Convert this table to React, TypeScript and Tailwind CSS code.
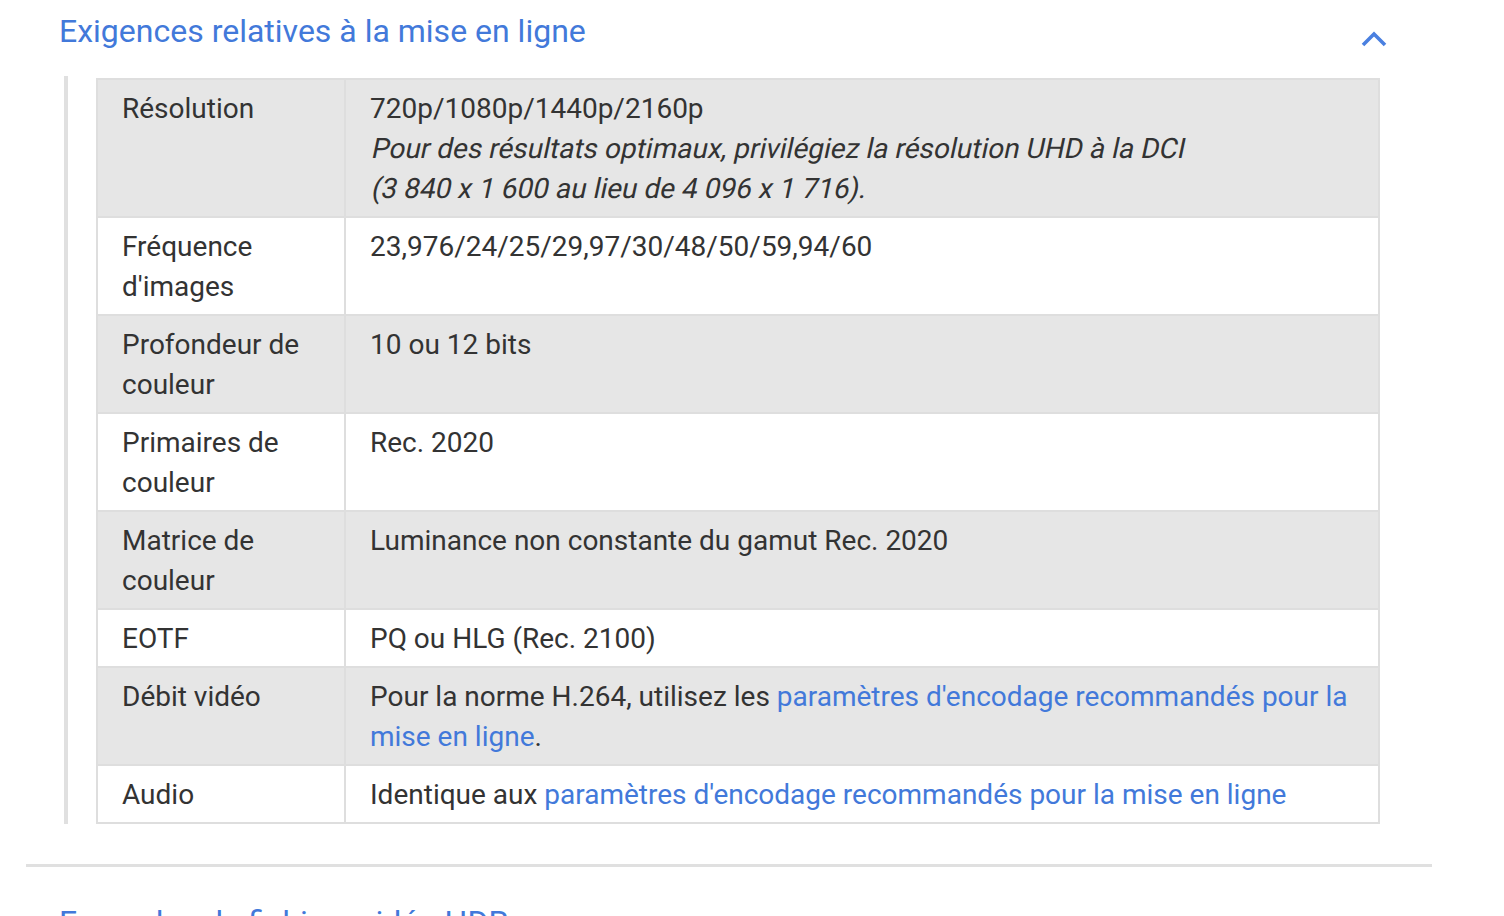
import React from "react";

const L = ({ children }: { children: React.ReactNode }) => (
  <span className="text-[#4279da]">{children}</span>
);

const Slant = ({ children }: { children: React.ReactNode }) => (
  <span className="inline-block -skew-x-12 origin-[0_31px]">{children}</span>
);

type Row = { k: React.ReactNode; v: React.ReactNode };

const rows: Row[] = [
  {
    k: "Résolution",
    v: (
      <>
        720p/1080p/1440p/2160p
        <br />
        <Slant>
          Pour des résultats optimaux, privilégiez la résolution UHD à la DCI
        </Slant>
        <br />
        <Slant>(3 840 x 1 600 au lieu de 4 096 x 1 716).</Slant>
      </>
    ),
  },
  { k: "Fréquence d'images", v: "23,976/24/25/29,97/30/48/50/59,94/60" },
  { k: "Profondeur de couleur", v: "10 ou 12 bits" },
  { k: "Primaires de couleur", v: "Rec. 2020" },
  { k: "Matrice de couleur", v: "Luminance non constante du gamut Rec. 2020" },
  { k: "EOTF", v: "PQ ou HLG (Rec. 2100)" },
  {
    k: "Débit vidéo",
    v: (
      <>
        Pour la norme H.264, utilisez les{" "}
        <L>paramètres d'encodage recommandés pour la mise en ligne</L>.
      </>
    ),
  },
  {
    k: "Audio",
    v: (
      <>
        Identique aux{" "}
        <L>paramètres d'encodage recommandés pour la mise en ligne</L>
      </>
    ),
  },
];

export default function App() {
  return (
    <div
      className="w-[1504px] h-[916px] overflow-hidden bg-white text-[#333333]"
      style={{ fontFamily: "Roboto, 'Noto Sans', sans-serif" }}
    >
      <div className="ml-[26px] w-[1406px]">
        {/* Header */}
        <div className="flex h-[76px] items-start justify-between pl-[33px] pr-[44px]">
          <div className="pt-[11px] text-[32px] leading-[40px] text-[#4279da]">
            Exigences relatives à la mise en ligne
          </div>
          <svg
            className="mt-[25px]"
            width="28"
            height="28"
            viewBox="0 0 28 28"
            fill="none"
          >
            <polyline
              points="3,20 14,9 25,20"
              stroke="#4a80e0"
              strokeWidth="3.6"
              strokeLinecap="butt"
              strokeLinejoin="miter"
            />
          </svg>
        </div>

        {/* Content */}
        <div className="ml-[38px] border-l-4 border-[#e0e0e0] pl-[28px] pt-[2px]">
          <div className="w-[1284px] border-2 border-[#dedede] text-[28px] leading-[40px]">
            {rows.map((r, i) => (
              <div
                key={i}
                className={`grid grid-cols-[248px_1fr] ${
                  i > 0 ? "border-t-2 border-[#dedede]" : ""
                } ${i % 2 === 0 ? "bg-[#e6e6e6]" : "bg-white"}`}
              >
                <div className="border-r-2 border-[#dedede] px-[24px] pt-[9px] pb-[7px]">
                  {r.k}
                </div>
                <div className="px-[24px] pt-[9px] pb-[7px]">{r.v}</div>
              </div>
            ))}
          </div>
        </div>

        {/* Divider */}
        <div className="mt-[40px] h-[3px] bg-[#e0e0e0]" />

        {/* Next header */}
        <div className="pl-[33px] pt-[35px] text-[32px] leading-[40px] text-[#4279da]">
          Exemples de fichiers vidéo HDR
        </div>
      </div>
    </div>
  );
}
